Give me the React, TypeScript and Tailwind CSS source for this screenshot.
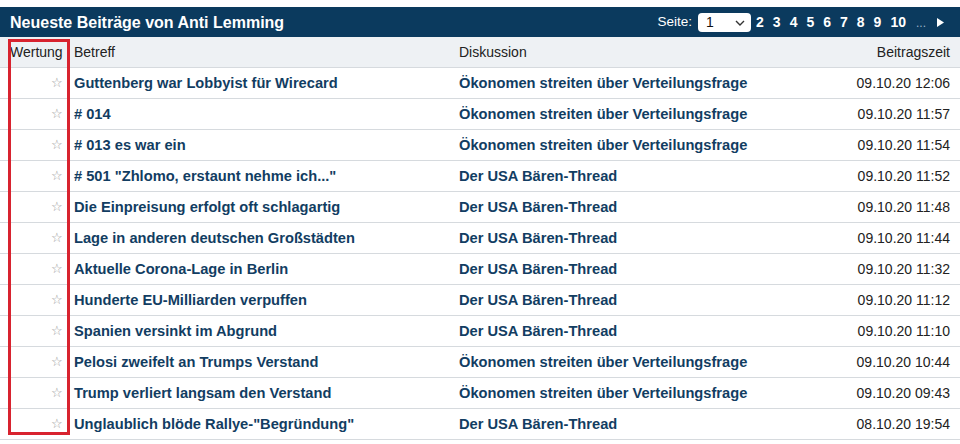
import React from "react";

const rows: [string, string, string][] = [
  ["Guttenberg war Lobbyist für Wirecard", "Ökonomen streiten über Verteilungsfrage", "09.10.20 12:06"],
  ["# 014", "Ökonomen streiten über Verteilungsfrage", "09.10.20 11:57"],
  ["# 013 es war ein", "Ökonomen streiten über Verteilungsfrage", "09.10.20 11:54"],
  ["# 501 \"Zhlomo, erstaunt nehme ich...\"", "Der USA Bären-Thread", "09.10.20 11:52"],
  ["Die Einpreisung erfolgt oft schlagartig", "Der USA Bären-Thread", "09.10.20 11:48"],
  ["Lage in anderen deutschen Großstädten", "Der USA Bären-Thread", "09.10.20 11:44"],
  ["Aktuelle Corona-Lage in Berlin", "Der USA Bären-Thread", "09.10.20 11:32"],
  ["Hunderte EU-Milliarden verpuffen", "Der USA Bären-Thread", "09.10.20 11:12"],
  ["Spanien versinkt im Abgrund", "Der USA Bären-Thread", "09.10.20 11:10"],
  ["Pelosi zweifelt an Trumps Verstand", "Ökonomen streiten über Verteilungsfrage", "09.10.20 10:44"],
  ["Trump verliert langsam den Verstand", "Ökonomen streiten über Verteilungsfrage", "09.10.20 09:43"],
  ["Unglaublich blöde Rallye-\"Begründung\"", "Der USA Bären-Thread", "08.10.20 19:54"],
];

export default function App() {
  return (
    <div className="w-[960px] h-[444px] bg-white overflow-hidden pt-[7px] relative" style={{ fontFamily: '"Liberation Sans", Arial, sans-serif' }}>
      <div className="h-[30px] bg-[#0b3a5e] flex items-center justify-between pl-[10px] pr-[16px] pt-[1px]">
        <div className="text-white font-bold text-[16px]">Neueste Beiträge von Anti Lemming</div>
        <div className="flex items-center text-white text-[14px]">
          <span className="mr-[6px] text-[13.5px]">Seite:</span>
          <div className="w-[53px] h-[19px] bg-white rounded-[4px] flex items-center justify-between pl-[8px] pr-[6px] text-[#111]">
            <span>1</span>
            <svg width="10" height="6" viewBox="0 0 10 6"><path d="M1 1l4 4 4-4" fill="none" stroke="#333" strokeWidth="1.4" /></svg>
          </div>
          <div className="flex items-center gap-[9px] font-bold ml-[5px]">
            {["2", "3", "4", "5", "6", "7", "8", "9", "10"].map((n) => (
              <span key={n}>{n}</span>
            ))}
          </div>
          <span className="ml-[10px] text-[#9fb4c8] text-[12px]">...</span>
          <svg width="7" height="9" viewBox="0 0 7 9" className="ml-[11px]"><path d="M0 0l7 4.5L0 9z" fill="#fff" /></svg>
        </div>
      </div>
      <table className="w-[960px] border-collapse text-[14px] table-fixed">
        <colgroup>
          <col className="w-[70px]" />
          <col className="w-[385px]" />
          <col className="w-[345px]" />
          <col className="w-[160px]" />
        </colgroup>
        <thead>
          <tr className="h-[30px] bg-[#eef1f4] text-[#222]">
            <th className="font-normal text-left pl-[10px] pt-[1px] whitespace-nowrap">Wertung</th>
            <th className="font-normal text-left pl-[4px] pt-[1px]">Betreff</th>
            <th className="font-normal text-left pl-[4px] pt-[1px]">Diskussion</th>
            <th className="font-normal text-right pr-[10px] pt-[1px]">Beitragszeit</th>
          </tr>
        </thead>
        <tbody>
          {rows.map((r, i) => (
            <tr key={i} className="h-[31px] border-t border-[#d6dade]">
              <td className="text-right pr-[7px] pt-[1px] text-[#9a9a9a] text-[12.5px]">☆</td>
              <td className="pl-[4px] pt-[1px] font-bold text-[#123d62] text-[14.67px] whitespace-nowrap">{r[0]}</td>
              <td className="pl-[4px] pt-[1px] font-bold text-[#123d62] text-[14.67px] whitespace-nowrap">{r[1]}</td>
              <td className="text-right pr-[10px] pt-[1px] text-[#222]">{r[2]}</td>
            </tr>
          ))}
          <tr className="border-t border-[#d6dade]"><td colSpan={4}></td></tr>
        </tbody>
      </table>
      <div className="absolute left-[8px] top-[39px] w-[62px] h-[396px] border-[3px] border-[#d8232f] pointer-events-none" />
    </div>
  );
}
